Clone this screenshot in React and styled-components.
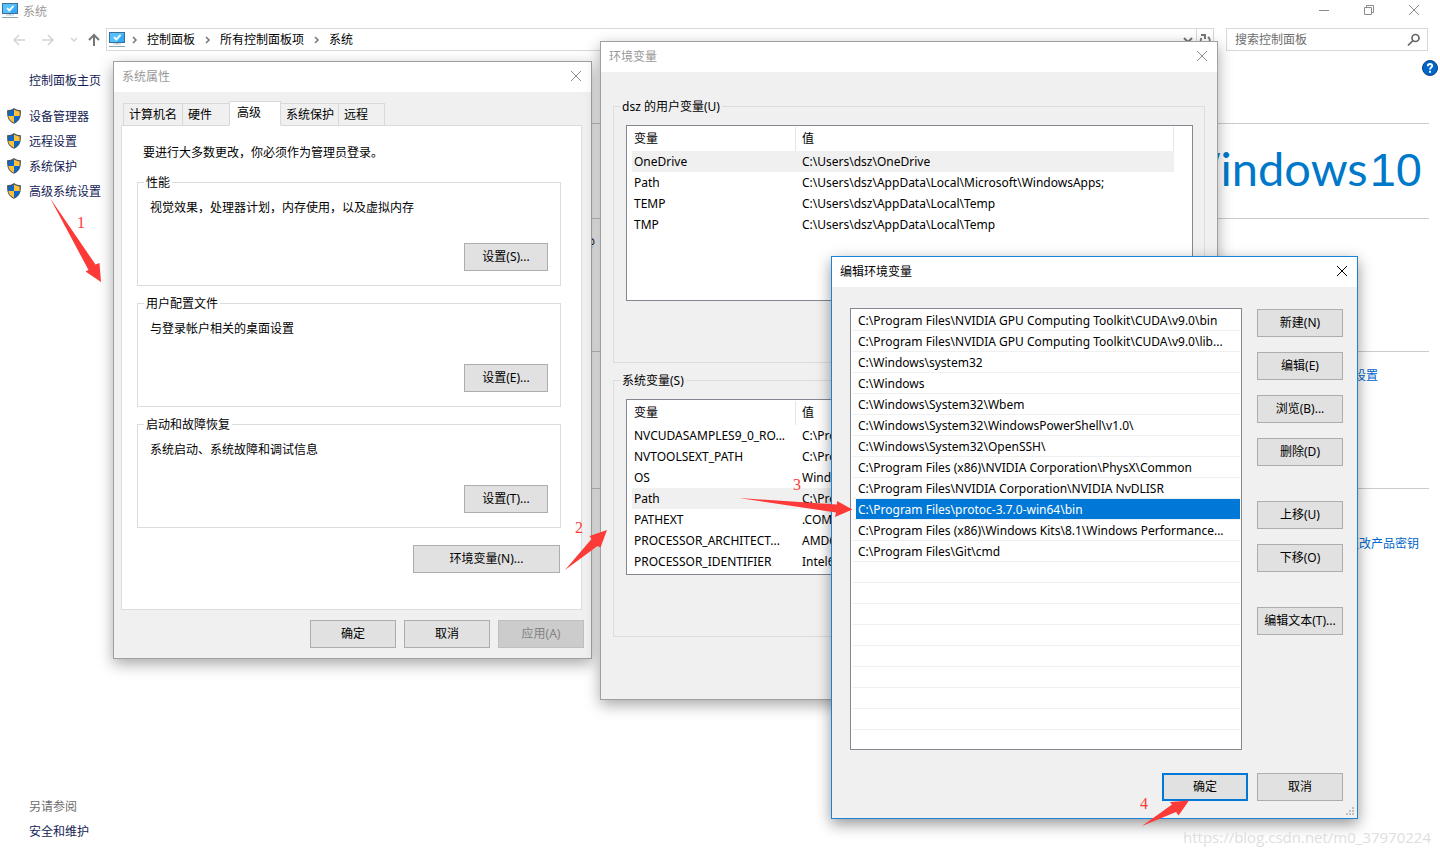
import React from 'react';
import styled, { createGlobalStyle } from 'styled-components';

const GlobalStyle = createGlobalStyle`
  * {
    box-sizing: border-box;
  }

  body {
    margin: 0;
    background: #fff;
    color: #000;
    font-family: 'Noto Sans', 'Noto Sans CJK SC', sans-serif;
    font-size: 12px;
    line-height: 16px;
    overflow: hidden;
  }

  button, input {
    font: inherit;
    color: inherit;
  }
`;

const Desktop = styled.div`
  position: relative;
  min-height: 100vh;
  display: flex;
  flex-direction: column;
`;

const WindowBar = styled.header`
  display: flex;
  align-items: center;
  gap: 5px;
  height: 22px;
  padding: 0 18px 0 2px;
  color: #999;
`;

const WindowTitle = styled.span`
  flex: 1;
  padding-top: 2px;
`;

const WindowControls = styled.div`
  display: flex;
  gap: 29px;
`;

const IconButton = styled.button`
  display: flex;
  align-items: center;
  justify-content: center;
  width: ${props => props.$width || 16}px;
  height: 16px;
  padding: 0;
  border: 0;
  background: none;
  flex: none;
`;

const NavRow = styled.nav`
  display: flex;
  align-items: center;
  padding: 6px 12px 0 12px;
`;

const NavButtons = styled.div`
  display: flex;
  align-items: center;
  width: 94px;
  gap: 9px;
`;

const AddressBar = styled.div`
  display: flex;
  align-items: center;
  flex: 1;
  height: 23px;
  padding-left: 2px;
  border: 1px solid #d9d9d9;
  gap: 7px;
`;

const Crumb = styled.a`
  padding: 0 3px 0 2px;
  color: #000;
  text-decoration: none;
`;

const AddressEnd = styled.div`
  display: flex;
  align-items: center;
  margin-left: auto;
  height: 21px;
`;

const RefreshCell = styled.div`
  display: flex;
  align-items: center;
  height: 21px;
  border-left: 1px solid #d9d9d9;
`;

const SearchBox = styled.label`
  display: flex;
  align-items: center;
  width: 202px;
  height: 23px;
  margin-left: 12px;
  padding: 0 6px 0 8px;
  border: 1px solid #d9d9d9;

  input {
    flex: 1;
    min-width: 0;
    padding: 0;
    border: 0;
    outline: 0;
    background: none;
  }

  input::placeholder {
    color: #6d6d6d;
    opacity: 1;
  }
`;

const Content = styled.div`
  display: flex;
  flex: 1;
`;

const Sidebar = styled.aside`
  display: flex;
  flex-direction: column;
  width: 200px;
  padding: 17px 0 11px 6px;
`;

const SideLink = styled.a`
  display: flex;
  align-items: center;
  gap: 7px;
  height: 25px;
  padding-left: ${props => (props.$plain ? 23 : 0)}px;
  color: #151c55;
  text-decoration: none;

  svg {
    margin-bottom: 2px;
  }
`;

const TaskList = styled.div`
  margin: 11px 0 auto;
`;

const SeeAlso = styled.div`
  height: 25px;
  padding: 5px 0 0 23px;
  color: #6d6d6d;
`;

const Details = styled.main`
  display: flex;
  flex-direction: column;
  flex: 1;
  padding: 9px 11px 0 0;
`;

const HelpRow = styled.div`
  display: flex;
  justify-content: flex-end;
  height: 63px;
  margin-right: -9px;
`;

const Section = styled.section`
  display: flex;
  justify-content: flex-end;
  height: ${props => props.$height}px;
  padding: ${props => props.$pad || 0}px ${props => props.$right || 0}px 0 0;
  border-top: 1px solid #ccc;
`;

const WindowsLogo = styled.div`
  display: flex;
  align-items: baseline;
  gap: 2px;
  color: #0078ca;
  font-family: Lato, sans-serif;
  font-size: 47px;
  line-height: 88px;
`;

const Version = styled.span`
  font-family: 'Liberation Sans', sans-serif;
`;

const PageLink = styled.a`
  color: #0066cc;
  text-decoration: none;
  height: 16px;
`;

const Dialog = styled.section`
  position: absolute;
  left: ${props => props.$left}px;
  top: ${props => props.$top}px;
  width: ${props => props.$width}px;
  display: flex;
  flex-direction: column;
  background: #f0f0f0;
  border: 1px solid ${props => (props.$active ? '#1883d7' : '#a0a0a0')};
  box-shadow: 0 5px 14px rgba(0, 0, 0, ${props => (props.$active ? '0.42' : '0.34')});
`;

const DialogTitle = styled.header`
  display: flex;
  align-items: center;
  justify-content: space-between;
  height: 30px;
  padding: 0 7px 0 8px;
  background: #fff;
  color: ${props => (props.$active ? '#000' : '#999')};
`;

const Button = styled.button`
  width: ${props => props.$width || 86}px;
  height: 28px;
  padding: 0;
  background: #e1e1e1;
  border: ${props => (props.$default ? '2px solid #0078d7' : '1px solid #adadad')};

  &:disabled {
    background: #ccc;
    border-color: #bfbfbf;
    color: #838383;
  }
`;

const Tabs = styled.div`
  display: flex;
  align-items: flex-end;
  height: 24px;
  margin: 10px 0 -1px 9px;
`;

const Tab = styled.button`
  width: ${props => props.$width}px;
  height: ${props => (props.$selected ? 25 : 23)}px;
  padding: 0 0 ${props => (props.$selected ? 2 : 0)}px ${props => (props.$selected ? 7 : 5)}px;
  margin-right: -1px;
  text-align: left;
  white-space: nowrap;
  background: ${props => (props.$selected ? '#fff' : '#f0f0f0')};
  border: 1px solid #d9d9d9;
  border-bottom-color: ${props => (props.$selected ? '#fff' : '#d9d9d9')};
  z-index: ${props => (props.$selected ? 1 : 0)};
`;

const TabPanel = styled.div`
  display: flex;
  flex-direction: column;
  height: 485px;
  margin: 0 9px 0 7px;
  padding: 19px 20px 0 15px;
  background: #fff;
  border: 1px solid #dcdcdc;
`;

const Notice = styled.p`
  margin: 0 0 13px 6px;
`;

const Group = styled.fieldset`
  display: flex;
  flex-direction: column;
  min-width: 0;
  height: ${props => props.$height}px;
  margin: 0 0 ${props => props.$gap}px;
  padding: 0 12px;
  border: 1px solid #dcdcdc;

  legend {
    padding: 0 2px;
    margin-left: -6px;
    height: 16px;
    line-height: 18px;
  }
`;

const Hint = styled.p`
  margin: 10px 0 27px;
`;

const Actions = styled.div`
  display: flex;
  justify-content: flex-end;
  gap: ${props => props.$gap || 9}px;
  padding: ${props => props.$pad};
`;

const VariableList = styled.div`
  height: 176px;
  margin: 11px -1px 0 0;
  padding: 1px 0 0 5px;
  background: #fff;
  border: 1px solid #828790;
`;

const VariableTable = styled.table`
  width: 542px;
  table-layout: fixed;
  border-collapse: separate;
  border-spacing: 0;

  th, td {
    height: 21px;
    padding: 0 0 0 6px;
    text-align: left;
    font-weight: normal;
    white-space: nowrap;
  }

  th {
    height: 24px;
    border-right: 1px solid #e5e5e5;
  }

  th:first-child, td:first-child {
    width: 164px;
    padding-left: 2px;
  }
`;

const VariableRow = styled.tr`
  background: ${props => (props.$selected ? '#f0f0f0' : 'transparent')};
`;

const EditBody = styled.div`
  display: flex;
  justify-content: space-between;
  padding: 21px 14px 0 18px;
`;

const PathList = styled.ul`
  width: 392px;
  height: 442px;
  margin: 0;
  padding: 1px 1px 0;
  list-style: none;
  background: #fff;
  border: 1px solid #828790;
`;

const PathItem = styled.li`
  height: 21px;
  padding-left: 4px;
  border-bottom: 1px solid #f0f0f0;
  white-space: nowrap;

  &:last-child {
    border-bottom: 0;
  }

  span {
    display: block;
    height: 20px;
    padding-left: 2px;
    line-height: 22px;
    background: ${props => (props.$selected ? '#0078d7' : 'transparent')};
    color: ${props => (props.$selected ? '#fff' : '#000')};
  }
`;

const ButtonColumn = styled.div`
  display: flex;
  flex-direction: column;
  gap: 35px;
  padding-top: 1px;
`;

const ButtonStack = styled.div`
  display: flex;
  flex-direction: column;
  gap: 15px;
`;

const GripRow = styled.div`
  display: flex;
  justify-content: flex-end;
  height: 17px;
  padding: 6px 3px 0 0;
`;

const EnvBody = styled.div`
  padding: 26px 12px 54px;
`;

// numbered arrows that lie over all the windows
const Annotations = styled.svg`
  position: absolute;
  left: 0;
  top: 0;
  overflow: visible;
  pointer-events: none;
  fill: #fc3b38;
  font-family: 'Liberation Serif', serif;
  font-size: 16px;
`;

const Watermark = styled.span`
  position: absolute;
  right: 9px;
  bottom: 8px;
  color: #dedede;
  font-family: 'Open Sans', sans-serif;
  font-size: 15px;
  line-height: 20px;
`;

const ComputerIcon = () => (
  <svg width="16" height="16" viewBox="0 0 16 16">
    <rect x="0.5" y="0.5" width="15" height="10" fill="#33aaf8" stroke="#3b6f96" />
    <path d="M1 1h14L8 10H1z" fill="#56c0fc" />
    <path d="M5 5l2.300 2.400L11.500 3" fill="none" stroke="#fff" strokeWidth="1.700" />
    <path d="M7 11h2v1H7z" fill="#9fb4c4" />
    <path d="M4 11.500h8v1H4z" fill="#b9c8d3" />
    <path d="M0 14h16v1H0z" fill="#8aa3b5" />
  </svg>
);

const ShieldIcon = () => (
  <svg width="16" height="16" viewBox="0 0 16 16">
    <path d="M8 0C6 1.500 3.600 2.200 1.100 2.200c-.2 6.500.6 10.600 6.900 13.600 6.300-3 7.100-7.100 6.900-13.600C12.400 2.200 10 1.500 8 0z" fill="#4d5560" />
    <path d="M8 1.600C6.300 2.700 4.400 3.300 2.400 3.400V8H8z" fill="#0b68c8" />
    <path d="M8 1.600c1.700 1.100 3.600 1.700 5.600 1.800V8H8z" fill="#ffc03a" />
    <path d="M2.400 8c.3 3 1.700 5 5.600 6.700V8z" fill="#ffc03a" />
    <path d="M13.600 8c-.3 3-1.700 5-5.600 6.700V8z" fill="#0b68c8" />
  </svg>
);

const Arrow = ({ path, color, size = 14, weight = 1.5 }) => (
  <svg width={size} height="14" viewBox={`0 0 ${size} 14`} fill="none" stroke={color} strokeWidth={weight}>
    <path d={path} />
  </svg>
);

const Chevron = () => (
  <svg width="6" height="8" viewBox="0 0 6 8" fill="none" stroke="#777" strokeWidth="1.5">
    <path d="M1 1l3 3-3 3" />
  </svg>
);

const CloseIcon = ({ color }) => (
  <svg width="12" height="12" viewBox="0 0 12 12" stroke={color}>
    <path d="M1 0l10 10M11 0L1 10" />
  </svg>
);

const Grip = () => (
  <svg width="8" height="8" viewBox="0 0 8 8" fill="#bfbfbf">
    <path d="M6 0h2v2H6zM3 3h2v2H3zM6 3h2v2H6zM0 6h2v2H0zM3 6h2v2H3zM6 6h2v2H6z" />
  </svg>
);

const tasks = ['设备管理器', '远程设置', '系统保护', '高级系统设置'];

const crumbs = ['控制面板', '所有控制面板项', '系统'];

const tabs = [
  { name: '计算机名', width: 60 },
  { name: '硬件', width: 48 },
  { name: '高级', width: 52, selected: true },
  { name: '系统保护', width: 59 },
  { name: '远程', width: 47 },
];

const groups = [
  { name: '性能', hint: '视觉效果，处理器计划，内存使用，以及虚拟内存', button: '设置(S)...' },
  { name: '用户配置文件', hint: '与登录帐户相关的桌面设置', button: '设置(E)...' },
  { name: '启动和故障恢复', hint: '系统启动、系统故障和调试信息', button: '设置(T)...' },
];

const userVariables = [
  ['OneDrive', 'C:\\Users\\dsz\\OneDrive'],
  ['Path', 'C:\\Users\\dsz\\AppData\\Local\\Microsoft\\WindowsApps;'],
  ['TEMP', 'C:\\Users\\dsz\\AppData\\Local\\Temp'],
  ['TMP', 'C:\\Users\\dsz\\AppData\\Local\\Temp'],
];

const systemVariables = [
  ['NVCUDASAMPLES9_0_RO...', 'C:\\Pro'],
  ['NVTOOLSEXT_PATH', 'C:\\Pro'],
  ['OS', 'Windo'],
  ['Path', 'C:\\Pro'],
  ['PATHEXT', '.COM;'],
  ['PROCESSOR_ARCHITECT...', 'AMD64'],
  ['PROCESSOR_IDENTIFIER', 'Intel64'],
];

const paths = [
  'C:\\Program Files\\NVIDIA GPU Computing Toolkit\\CUDA\\v9.0\\bin',
  'C:\\Program Files\\NVIDIA GPU Computing Toolkit\\CUDA\\v9.0\\lib...',
  'C:\\Windows\\system32',
  'C:\\Windows',
  'C:\\Windows\\System32\\Wbem',
  'C:\\Windows\\System32\\WindowsPowerShell\\v1.0\\',
  'C:\\Windows\\System32\\OpenSSH\\',
  'C:\\Program Files (x86)\\NVIDIA Corporation\\PhysX\\Common',
  'C:\\Program Files\\NVIDIA Corporation\\NVIDIA NvDLISR',
  'C:\\Program Files\\protoc-3.7.0-win64\\bin',
  'C:\\Program Files (x86)\\Windows Kits\\8.1\\Windows Performance...',
  'C:\\Program Files\\Git\\cmd',
  '', '', '', '', '', '', '', '', '',
];

const editButtons = [
  ['新建(N)', '编辑(E)', '浏览(B)...', '删除(D)'],
  ['上移(U)', '下移(O)'],
  ['编辑文本(T)...'],
];

const Variables = ({ title, rows, selected, gap }) => (
  <Group $height={265} $gap={gap}>
    <legend>{title}</legend>
    <VariableList>
      <VariableTable>
        <thead>
          <tr>
            <th>变量</th>
            <th>值</th>
          </tr>
        </thead>
        <tbody>
          {rows.map(([name, value], i) => <VariableRow key={name} $selected={i === selected}>
            <td>{name}</td>
            <td>{value}</td>
          </VariableRow>)}
        </tbody>
      </VariableTable>
    </VariableList>
  </Group>
);

const SystemProperties = () => (
  <Dialog $left={113} $top={61} $width={479}>
    <DialogTitle>
      系统属性
      <IconButton aria-label="关闭"><CloseIcon color="#8c8c8c" /></IconButton>
    </DialogTitle>
    <Tabs>
      {tabs.map(tab => <Tab key={tab.name} $width={tab.width} $selected={tab.selected}>{tab.name}</Tab>)}
    </Tabs>
    <TabPanel>
      <Notice>要进行大多数更改，你必须作为管理员登录。</Notice>
      {groups.map(group => <Group key={group.name} $height={112} $gap={9}>
        <legend>{group.name}</legend>
        <Hint>{group.hint}</Hint>
        <Actions $pad="0">
          <Button $width={84}>{group.button}</Button>
        </Actions>
      </Group>)}
      <Actions $pad="8px 1px 0 0">
        <Button $width={147}>环境变量(N)...</Button>
      </Actions>
    </TabPanel>
    <Actions $pad="10px 7px" $gap={8}>
      <Button>确定</Button>
      <Button>取消</Button>
      <Button disabled>应用(A)</Button>
    </Actions>
  </Dialog>
);

const EnvironmentVariables = () => (
  <Dialog $left={600} $top={41} $width={618}>
    <DialogTitle>
      环境变量
      <IconButton aria-label="关闭"><CloseIcon color="#8c8c8c" /></IconButton>
    </DialogTitle>
    <EnvBody>
      <Variables title="dsz 的用户变量(U)" rows={userVariables} selected={0} gap={9} />
      <Variables title="系统变量(S)" rows={systemVariables} selected={3} gap={8} />
    </EnvBody>
  </Dialog>
);

const EditVariable = () => (
  <Dialog $left={831} $top={256} $width={527} $active>
    <DialogTitle $active>
      编辑环境变量
      <IconButton aria-label="关闭"><CloseIcon color="#000" /></IconButton>
    </DialogTitle>
    <EditBody>
      <PathList>
        {paths.map((path, i) => <PathItem key={i} $selected={i === 9}><span>{path}</span></PathItem>)}
      </PathList>
      <ButtonColumn>
        {editButtons.map((stack, i) => <ButtonStack key={i}>
          {stack.map(name => <Button key={name}>{name}</Button>)}
        </ButtonStack>)}
      </ButtonColumn>
    </EditBody>
    <Actions $pad="23px 14px 0">
      <Button $default>确定</Button>
      <Button>取消</Button>
    </Actions>
    <GripRow><Grip /></GripRow>
  </Dialog>
);

const App = () => (
  <>
    <GlobalStyle />
    <Desktop>
      <WindowBar>
        <ComputerIcon />
        <WindowTitle>系统</WindowTitle>
        <WindowControls>
          <IconButton aria-label="最小化">
            <svg width="12" height="12" stroke="#8c8c8c"><path d="M1 5.500h10" /></svg>
          </IconButton>
          <IconButton aria-label="还原">
            <svg width="12" height="12" fill="none" stroke="#8c8c8c"><path d="M1.500 2.500h7v7h-7zM3.500 2.500v-2h7v7h-2" /></svg>
          </IconButton>
          <IconButton aria-label="关闭"><CloseIcon color="#8c8c8c" /></IconButton>
        </WindowControls>
      </WindowBar>
      <NavRow>
        <NavButtons>
          <IconButton $width={14} aria-label="后退"><Arrow color="#d4d4d4" path="M13 7H2M7 2L2 7l5 5" /></IconButton>
          <IconButton $width={26} aria-label="前进"><Arrow color="#d4d4d4" path="M1 7h11M7 2l5 5-5 5" /></IconButton>
          <IconButton $width={8} aria-label="最近"><Arrow color="#d4d4d4" size={8} path="M1 5l3 3 3-3" /></IconButton>
          <IconButton $width={14} aria-label="向上"><Arrow color="#777" weight={2} path="M7 13V2M2 7l5-5 5 5" /></IconButton>
        </NavButtons>
        <AddressBar>
          <ComputerIcon />
          {crumbs.map(crumb => <React.Fragment key={crumb}>
            <Chevron />
            <Crumb href="#">{crumb}</Crumb>
          </React.Fragment>)}
          <AddressEnd>
            <IconButton aria-label="展开"><Arrow color="#777" size={12} weight={2} path="M2 5l4 4 4-4" /></IconButton>
            <RefreshCell>
              <IconButton aria-label="刷新"><Arrow color="#777" weight={2} path="M10 4a4.500 4.500 0 1 1-6.500 1M3 2h4v4" /></IconButton>
            </RefreshCell>
          </AddressEnd>
        </AddressBar>
        <SearchBox>
          <input aria-label="搜索控制面板" placeholder="搜索控制面板" />
          <svg width="14" height="14" fill="none" stroke="#666" strokeWidth="1.700">
            <circle cx="8.500" cy="5" r="3.500" />
            <path d="M6 7.500l-5 5" />
          </svg>
        </SearchBox>
      </NavRow>
      <Content>
        <Sidebar>
          <SideLink href="#" $plain>控制面板主页</SideLink>
          <TaskList>
            {tasks.map(task => <SideLink key={task} href="#"><ShieldIcon />{task}</SideLink>)}
          </TaskList>
          <SeeAlso>另请参阅</SeeAlso>
          <SideLink href="#" $plain>安全和维护</SideLink>
        </Sidebar>
        <Details>
          <HelpRow>
            <IconButton aria-label="帮助">
              <svg width="16" height="16" viewBox="0 0 16 16">
                <circle cx="8" cy="8" r="7.500" fill="#0066cc" stroke="#0b3f7d" />
                <path d="M5.800 6.200c0-3 4.600-2.800 4.400-.2-.1 1.500-2.200 1.600-2.200 3.400M8 10.800v2" fill="none" stroke="#fff" strokeWidth="1.900" />
              </svg>
            </IconButton>
          </HelpRow>
          <Section $height={95} $right={7}>
            <WindowsLogo><span>Windows</span><Version>10</Version></WindowsLogo>
          </Section>
          <Section $height={133} $pad={16} $right={834}>@</Section>
          <Section $height={137} $pad={16} $right={51}>
            <PageLink href="#">更改设置</PageLink>
          </Section>
          <Section $height={120} $pad={47} $right={10}>
            <PageLink href="#">更改产品密钥</PageLink>
          </Section>
        </Details>
      </Content>
      <SystemProperties />
      <EnvironmentVariables />
      <EditVariable />
      <Annotations width="1" height="1">
        <path d="M50 198L88.500 270l-3 1.500 15.500 10.500-1.500-19-4 1.500z" />
        <path d="M565 570l32.500-24 3 1.500 6.500-17.500-17.500 6 2 3z" />
        <path d="M739 498l97 14.500-1 4.500 17.500-7.500-15.500-8.500v3.500z" />
        <path d="M1142 826l34-14 2.500 3.500 10.500-15-19 1.500 2 2.500z" />
        <text x="77" y="228">1</text>
        <text x="575" y="533">2</text>
        <text x="793" y="490">3</text>
        <text x="1140" y="809">4</text>
      </Annotations>
      <Watermark>https://blog.csdn.net/m0_37970224</Watermark>
    </Desktop>
  </>
);

export default App;
